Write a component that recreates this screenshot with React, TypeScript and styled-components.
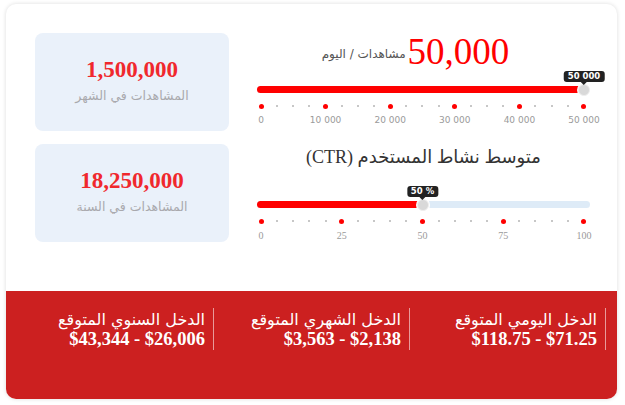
import React from "react";
import styled, { createGlobalStyle } from "styled-components";

const GlobalStyle = createGlobalStyle`
  html, body {
    margin: 0;
    padding: 0;
    background: #ffffff;
  }
  body {
    font-family: "DejaVu Sans", "Noto Sans", sans-serif;
  }
`;

const Page = styled.div`
  width: 625px;
  height: 405px;
  padding: 4px 8px 6px 6px;
  box-sizing: border-box;
`;

const Card = styled.div`
  direction: rtl;
  height: 100%;
  display: flex;
  flex-direction: column;
  background: #fff;
  border-radius: 10px;
  box-shadow: 0 0 4px rgba(0, 0, 0, 0.14);
  overflow: hidden;
`;

const Top = styled.div`
  flex: 1;
  display: flex;
  gap: 28px;
  padding: 29px 27px 0 29px;
`;

const SliderColumn = styled.div`
  flex: 1;
  display: flex;
  flex-direction: column;
`;

const BoxColumn = styled.div`
  width: 194px;
  display: flex;
  flex-direction: column;
  gap: 13px;
`;

const StatBox = styled.div`
  height: 98px;
  background: #eaf1fa;
  border-radius: 8px;
  display: flex;
  flex-direction: column;
  align-items: center;
  justify-content: center;
  gap: 7px;
  padding-bottom: 3px;
  box-sizing: border-box;
`;

const StatValue = styled.div`
  font-family: "Liberation Serif", serif;
  font-weight: bold;
  font-size: 23px;
  color: #f0282d;
  line-height: 1;
`;

const StatLabel = styled.div`
  font-size: 12.5px;
  color: #a9a9ad;
`;

const Heading = styled.div`
  display: flex;
  justify-content: center;
  align-items: center;
  gap: 2px;
  height: 46px;
  margin-top: -4px;
  padding-right: 16px;
`;

const BigNumber = styled.span`
  font-family: "Liberation Serif", serif;
  font-size: 37px;
  color: #ff0000;
  line-height: 46px;
`;

const Unit = styled.span`
  font-size: 12px;
  color: #555;
  padding-top: 4px;
`;

const Title = styled.div`
  text-align: center;
  font-family: "Liberation Serif", "DejaVu Sans", serif;
  font-size: 18px;
  color: #333;
  height: 22px;
  margin-top: 21px;
`;

const Slider = styled.div<{ $top: number }>`
  direction: ltr;
  position: relative;
  margin-top: ${(p) => p.$top}px;
`;

const Track = styled.div`
  height: 7px;
  border-radius: 4px;
  background: #deebf7;
  position: relative;
`;

const Fill = styled.div`
  height: 100%;
  border-radius: 4px;
  background: #ff0000;
`;

const Thumb = styled.div`
  position: absolute;
  top: 50%;
  width: 12px;
  height: 12px;
  margin-left: -6px;
  margin-top: -6px;
  border-radius: 50%;
  background: #d9d9d9;
  border: 1px solid #eeeeee;
  box-sizing: border-box;
  box-shadow: 0 0 0 1px #fff;
`;

const Tip = styled.div`
  position: absolute;
  bottom: 13px;
  left: 50%;
  transform: translateX(-50%);
  background: #222;
  color: #fff;
  font-size: 8.5px;
  font-weight: bold;
  line-height: 11px;
  padding: 0 4px;
  border-radius: 3px;
  white-space: nowrap;

  &::after {
    content: '';
    position: absolute;
    left: 50%;
    bottom: -3px;
    margin-left: -3px;
    border-left: 3px solid transparent;
    border-right: 3px solid transparent;
    border-top: 3px solid #222;
  }
`;

const Marks = styled.div`
  display: flex;
  justify-content: space-between;
  align-items: center;
  padding: 0 6px 0 4px;
  height: 6px;
  margin-top: 10px;
`;

const Dot = styled.span<{ $major: boolean }>`
  width: ${(p) => (p.$major ? 5 : 2)}px;
  height: ${(p) => (p.$major ? 5 : 2)}px;
  margin: 0 ${(p) => (p.$major ? -2.5 : -1)}px;
  border-radius: 50%;
  background: ${(p) => (p.$major ? "#ff0000" : "#b5b5b5")};
`;

const Labels = styled.div`
  display: flex;
  justify-content: space-between;
  padding: 0 6px 0 4px;
  margin-top: 6px;
`;

const Label = styled.span<{ $serif?: boolean }>`
  width: 0;
  display: flex;
  justify-content: center;
  white-space: nowrap;
  font-family: ${(p) => (p.$serif ? '"Liberation Serif", serif' : '"DejaVu Sans", sans-serif')};
  font-size: ${(p) => (p.$serif ? 10 : 9)}px;
  color: #9a9a9a;
`;

const Footer = styled.div`
  height: 108px;
  background: #cc2020;
  display: flex;
  padding: 17px 11px 0 0;
  box-sizing: border-box;
`;

const Income = styled.div`
  width: 196px;
  height: 42px;
  border-right: 1px solid rgba(255, 255, 255, 0.55);
  padding-right: 8px;
  box-sizing: border-box;
  display: flex;
  flex-direction: column;
  align-items: flex-start;
  color: #fff;
`;

const IncomeLabel = styled.div`
  font-size: 16px;
  line-height: 18px;
  margin-top: 3px;
`;

const IncomeValue = styled.div`
  direction: ltr;
  font-family: "Liberation Serif", serif;
  font-weight: bold;
  font-size: 18.5px;
  line-height: 20px;
`;

type SliderProps = {
  value: number;
  tip: string;
  labels: string[];
  every: number;
  serif?: boolean;
  top: number;
};

const RangeSlider = ({ value, tip, labels, every, serif, top }: SliderProps) => {
  const count = (labels.length - 1) * every + 1;
  return (
    <Slider $top={top}>
      <Track>
        <Fill style={{ width: `${value * 100}%` }} />
        <Thumb style={{ left: `calc(4px + ${value} * (100% - 10px))` }}>
          <Tip>{tip}</Tip>
        </Thumb>
      </Track>
      <Marks>
        {Array.from({ length: count }).map((_, i) => (
          <Dot key={i} $major={i % every === 0} />
        ))}
      </Marks>
      <Labels>
        {labels.map((l) => (
          <Label key={l} $serif={serif}>{l}</Label>
        ))}
      </Labels>
    </Slider>
  );
};

const incomes = [
  { label: "الدخل اليومي المتوقع", value: "$118.75 - $71.25" },
  { label: "الدخل الشهري المتوقع", value: "$3,563 - $2,138" },
  { label: "الدخل السنوي المتوقع", value: "$43,344 - $26,006" },
];

export default function App() {
  return (
    <>
      <GlobalStyle />
      <Page>
        <Card>
          <Top>
            <SliderColumn>
              <Heading>
                <BigNumber>50,000</BigNumber>
                <Unit>مشاهدات / اليوم</Unit>
              </Heading>
              <RangeSlider
                value={1}
                top={11}
                every={4}
                tip="50 000"
                labels={["0", "10 000", "20 000", "30 000", "40 000", "50 000"]}
              />
              <Title>متوسط نشاط المستخدم (CTR)</Title>
              <RangeSlider
                value={0.5}
                top={33}
                every={5}
                tip="50 %"
                serif
                labels={["0", "25", "50", "75", "100"]}
              />
            </SliderColumn>
            <BoxColumn>
              <StatBox>
                <StatValue>1,500,000</StatValue>
                <StatLabel>المشاهدات في الشهر</StatLabel>
              </StatBox>
              <StatBox>
                <StatValue>18,250,000</StatValue>
                <StatLabel>المشاهدات في السنة</StatLabel>
              </StatBox>
            </BoxColumn>
          </Top>
          <Footer>
            {incomes.map((it) => (
              <Income key={it.label}>
                <IncomeLabel>{it.label}</IncomeLabel>
                <IncomeValue>{it.value}</IncomeValue>
              </Income>
            ))}
          </Footer>
        </Card>
      </Page>
    </>
  );
}
